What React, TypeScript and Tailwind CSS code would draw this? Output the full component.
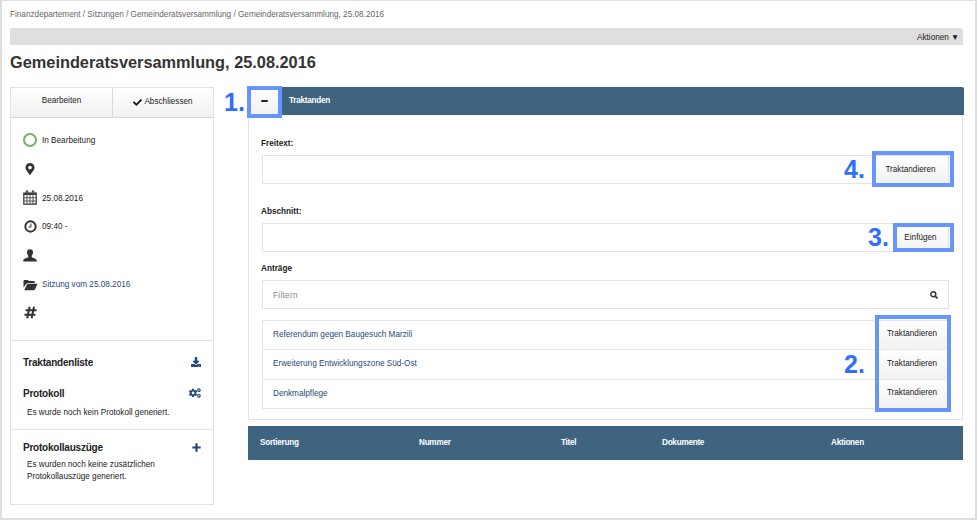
import React from "react";
import { FaCheck, FaDownload, FaCogs, FaMapMarkerAlt } from "react-icons/fa";

const btn = "flex items-center justify-center bg-linear-to-b from-white to-[#f1f1f1] whitespace-nowrap";

function CalendarIcon() {
  return (
    <svg width="14" height="15" viewBox="0 0 14 15" fill="none" stroke="#333">
      <path d="M.8 3.200h12.400v11H.8z" strokeWidth="1.200" />
      <path d="M.8 4h12.400" strokeWidth="1.800" />
      <path d="M1 7.800h12M1 11h12M4 5v9M7 5v9M10 5v9" strokeWidth=".8" />
      <path d="M4 .6v3.500M10 .6v3.500" strokeWidth="2.400" />
      <path d="M4 1.400v2M10 1.400v2" stroke="#aaa" strokeWidth=".7" />
    </svg>
  );
}

function ClockIcon() {
  return (
    <svg width="13" height="13" viewBox="0 0 13 13" fill="none" stroke="#333">
      <circle cx="6.500" cy="6.500" r="5.200" strokeWidth="1.900" />
      <path d="M6.900 3.500v3.500H4.500" strokeWidth="1" />
    </svg>
  );
}

function UserIcon() {
  return (
    <svg width="14" height="13" viewBox="0 0 14 13" fill="#333">
      <path d="M7 .3c2.200 0 3.100 1.300 3 3.200-.1 1.600-.7 2.500-1.300 3.200v1.200c.5 1 4.900 1.300 5.100 3.500v1.200H.2v-1.200c.2-2.200 4.600-2.500 5.100-3.500V6.700C4.700 6 4.100 5.100 4 3.500 3.900 1.600 4.800.3 7 .3z" />
    </svg>
  );
}

function FolderIcon() {
  return (
    <svg width="15" height="12" viewBox="0 0 15 12" className="shrink-0" fill="#333">
      <path d="M.5 8.500V2Q.5 1 1.500 1h3q1 0 1 1h5.300q1 0 1 1v.9H5.200Q4 3.900 3.200 5z" />
      <path d="M5.300 4.700h9.200L12.200 10q-.5 1.200-1.700 1.200H1.200L3.800 5.700q.5-1 1.500-1z" />
    </svg>
  );
}

function HashIcon() {
  return (
    <svg width="13" height="13" viewBox="0 0 13 13" fill="none" stroke="#333" strokeWidth="2">
      <path d="M5.600.7 3.200 12.300M10 .7 7.600 12.300M1.600 4.200h11M.4 8.700h11" />
    </svg>
  );
}

function PlusIcon() {
  return (
    <svg width="9" height="9" viewBox="0 0 9 9" fill="none" stroke="#1f4a7a" strokeWidth="2.200">
      <path d="M4.500.3v8.400M.3 4.500h8.400" />
    </svg>
  );
}

function SearchIcon() {
  return (
    <svg width="8" height="8" viewBox="0 0 8 8" fill="none" stroke="#333">
      <circle cx="3.300" cy="3.300" r="2.500" strokeWidth="1.400" />
      <path d="m5.200 5.200 2.200 2.200" strokeWidth="1.700" />
    </svg>
  );
}

function MetaRow({ icon, label, h, link }: { icon: React.ReactNode; label?: string; h: string; link?: boolean }) {
  return (
    <div className={`flex items-center ${h}`}>
      <span className="flex w-[14px] justify-center text-[#333]">{icon}</span>
      <span className={`ml-[5px] whitespace-nowrap text-[8.2px] ${link ? "pt-px text-[#1f4a7a]" : "pt-[3px] text-[#222]"}`}>{label}</span>
    </div>
  );
}

function Highlight({ place }: { place: string }) {
  return <div className={`pointer-events-none absolute border-4 border-[#6695ff] ${place}`} />;
}

function Marker({ place, children }: { place: string; children: string }) {
  return <div className={`absolute text-[25px] leading-[26px] font-bold text-[#2f6fff] ${place}`}>{children}</div>;
}

const proposals = ["Referendum gegen Baugesuch Marzili", "Erweiterung Entwicklungszone Süd-Ost", "Denkmalpflege"];

function Sidebar() {
  return (
    <aside className="h-[418px] w-[204px] shrink-0 border border-[#e3e3e3] text-[8.2px] text-[#222]">
      <div className="flex h-[30px] border-b border-[#d9d9d9]">
        <div className={`${btn} w-[102px] border-r border-[#d9d9d9] pb-[2px]`}>Bearbeiten</div>
        <div className={`${btn} flex-1 gap-[2px]`}><FaCheck size={9} color="#111" />Abschliessen</div>
      </div>
      <div className="h-[223px] border-b border-[#e3e3e3] pt-[7px] pl-[12px]">
        <MetaRow h="h-[29px]" icon={<span className="size-[14px] shrink-0 rounded-full border-2 border-[#79b160]" />} label="In Bearbeitung" />
        <MetaRow h="h-[29px]" icon={<FaMapMarkerAlt size={12} />} />
        <MetaRow h="h-[29px]" icon={<CalendarIcon />} label="25.08.2016" />
        <MetaRow h="h-[28px]" icon={<ClockIcon />} label="09:40 -" />
        <MetaRow h="h-[30px]" icon={<UserIcon />} />
        <MetaRow h="h-[30px]" icon={<FolderIcon />} label="Sitzung vom 25.08.2016" link />
        <MetaRow h="h-[25px]" icon={<HashIcon />} />
      </div>
      <div className="h-[89px] border-b border-[#e3e3e3] px-[12px] pt-[14px]">
        <div className="flex h-[14px] items-center justify-between text-[10px] tracking-[-0.22px] font-bold"><span className="pt-px">Traktandenliste</span><FaDownload size={10} color="#1f4a7a" /></div>
        <div className="mt-[17px] flex h-[14px] items-center justify-between text-[10px] tracking-[-0.22px] font-bold"><span className="pt-px">Protokoll</span><FaCogs size={12} color="#1f4a7a" /></div>
        <p className="mt-[7px] ml-[4px] leading-[12px] whitespace-nowrap">Es wurde noch kein Protokoll generiert.</p>
      </div>
      <div className="px-[12px] pt-[10px]">
        <div className="flex h-[14px] items-center justify-between text-[10px] tracking-[-0.22px] font-bold"><span className="pt-px">Protokollauszüge</span><PlusIcon /></div>
        <p className="mt-[5px] ml-[4px] leading-[12px] whitespace-nowrap">Es wurden noch keine zusätzlichen<br />Protokollauszüge generiert.</p>
      </div>
    </aside>
  );
}

function Agenda() {
  return (
    <main className="w-[716px] text-[8.2px] text-[#222]">
      <div className="flex h-[28px] items-center rounded-t-[2px] bg-[#3f6480] text-white">
        <div className={`${btn} h-[28px] w-[33px] pr-px`}><span className="h-[2px] w-[7px] rounded-full bg-[#222]" /></div>
        <span className="ml-[8px] tracking-[-0.27px] font-bold">Traktanden</span>
      </div>
      <section className="h-[305px] w-[715px] border border-t-0 border-[#e3e3e3] px-[13px] pt-[23px]">
        <div className="-ml-px h-[12px] leading-[12px] font-bold">Freitext:</div>
        <div className="mt-[5px] flex h-[29px] border border-[#e3e3e3]">
          <div className="flex-1" />
          <div className={`${btn} w-[75px] pt-[2px]`}>Traktandieren</div>
        </div>
        <div className="mt-[22px] -ml-px h-[12px] leading-[12px] font-bold">Abschnitt:</div>
        <div className="mt-[5px] flex h-[29px] border border-[#e3e3e3]">
          <div className="flex-1" />
          <div className={`${btn} w-[55px] pt-[2px]`}>Einfügen</div>
        </div>
        <div className="mt-[11px] -ml-px h-[12px] leading-[12px] font-bold">Anträge</div>
        <div className="mt-[5px] flex h-[29px] items-center justify-between border border-[#e3e3e3] pr-[10px] pl-[10px] text-[#888]">
          <span className="pt-[3px] tracking-[0.3px]">Filtern</span><SearchIcon />
        </div>
        <div className="mt-[11px] border border-[#e3e3e3]">
          {proposals.map((p, i) => (
            <div key={p} className={`flex ${i === 0 ? "h-[28px]" : i === 1 ? "h-[30px] border-t border-[#e8e8e8]" : "h-[29px] border-t border-[#e8e8e8]"}`}>
              <span className="flex flex-1 items-center pl-[10px] text-[#1f4a7a]">{p}</span>
              <span className={`${btn} w-[72px] pb-px`}>Traktandieren</span>
            </div>
          ))}
        </div>
      </section>
      <div className="mt-[6px] flex h-[34px] w-[715px] items-center bg-[#3f6480] pl-[12px] tracking-[-0.27px] font-bold text-white">
        <span className="w-[159px]">Sortierung</span>
        <span className="w-[142px]">Nummer</span>
        <span className="w-[101px]">Titel</span>
        <span className="w-[169px]">Dokumente</span>
        <span>Aktionen</span>
      </div>
    </main>
  );
}

export default function App() {
  return (
    <div className="relative h-[520px] w-[977px] overflow-hidden border-2 border-t-1 border-[#dedede] bg-white font-['Liberation_Sans',Arial,sans-serif] text-[#222]">
      <div className="pt-px pl-[8px]">
        <nav className="mt-[7px] h-[12px] text-[8.2px] leading-[12px] whitespace-nowrap text-[#666]">
          Finanzdepartement / Sitzungen / Gemeinderatsversammlung / Gemeinderatsversammlung, 25.08.2016
        </nav>
        <div className="mt-[7px] flex h-[17px] w-[953px] items-center justify-end gap-[2px] rounded-t-[3px] bg-[#dfdfdf] pt-[3px] pr-[4px] text-[8.2px]"><span>Aktionen</span><span>▼</span></div>
        <h1 className="mt-[7px] h-[20px] text-[16.34px] leading-[20px] font-bold whitespace-nowrap text-[#333]">Gemeinderatsversammlung, 25.08.2016</h1>
        <div className="mt-[15px] flex gap-[34px]">
          <Sidebar />
          <Agenda />
        </div>
      </div>
      <Highlight place="left-[245px] top-[85px] h-[32px] w-[35px]" />
      <Highlight place="left-[870px] top-[150px] h-[36px] w-[82px]" />
      <Highlight place="left-[891px] top-[222px] h-[29px] w-[61px]" />
      <Highlight place="left-[873px] top-[314px] h-[97px] w-[76px]" />
      <Marker place="left-[222px] top-[88px]">1.</Marker>
      <Marker place="left-[842px] top-[155px]">4.</Marker>
      <Marker place="left-[866px] top-[223px]">3.</Marker>
      <Marker place="left-[842px] top-[350px]">2.</Marker>
    </div>
  );
}
